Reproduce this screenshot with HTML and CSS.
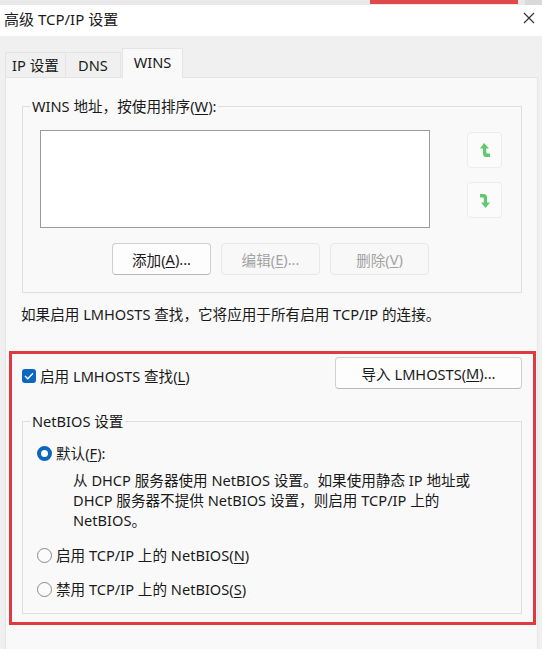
FILE: index.html
```html
<!DOCTYPE html>
<html lang="zh-CN">
<head>
<meta charset="utf-8">
<title>高级 TCP/IP 设置</title>
<link rel="stylesheet" href="styles.css">
</head>
<body>
<div class="strip"><span class="strip-red"></span><span class="strip-end"></span></div>
<div class="titlebar">
  <span class="title">高级 TCP/IP 设置</span>
  <svg class="close" width="12" height="12" viewBox="0 0 12 12"><path d="M1 1L11 11M11 1L1 11" stroke="#333" stroke-width="1.2" fill="none"/></svg>
</div>
<div class="tabs">
  <div class="tab t-ip">IP 设置</div>
  <div class="tab t-dns">DNS</div>
  <div class="tab active">WINS</div>
</div>
<div class="panel">
  <fieldset class="group wins">
    <legend>WINS 地址，按使用排序(<u>W</u>):</legend>
    <div class="list-row">
      <div class="listbox"></div>
      <div class="arrows">
        <div class="arrow-btn">
          <svg width="12" height="15" viewBox="0 0 12 15"><path d="M5 0L10 5.5H7.2V9.2Q7.2 10.6 8.6 10.6H11V14H7.6Q4 14 4 10.4V5.5H1Z" fill="#62c86e"/></svg>
        </div>
        <div class="arrow-btn">
          <svg width="12" height="15" viewBox="0 0 12 15"><path d="M1 1H4.6Q8 1 8 4.6V9.5H11L6.5 15L2 9.5H4.8V5.8Q4.8 4.4 3.4 4.4H1Z" fill="#62c86e"/></svg>
        </div>
      </div>
    </div>
    <div class="btn-row">
      <div class="btn">添加(<u>A</u>)...</div>
      <div class="btn disabled">编辑(<u>E</u>)...</div>
      <div class="btn disabled">删除(<u>V</u>)</div>
    </div>
  </fieldset>
  <p class="info">如果启用 LMHOSTS 查找，它将应用于所有启用 TCP/IP 的连接。</p>
  <div class="highlight">
    <div class="lm-row">
      <div class="check-label">
        <span class="checkbox"><svg width="10" height="8" viewBox="0 0 10 8"><path d="M1 4L3.8 6.8L9 1.2" stroke="#fff" stroke-width="1.4" fill="none"/></svg></span>
        <span>启用 LMHOSTS 查找(<u>L</u>)</span>
      </div>
      <div class="btn import">导入 LMHOSTS(<u>M</u>)...</div>
    </div>
    <fieldset class="group netbios">
      <legend>NetBIOS 设置</legend>
      <div class="radio-row first">
        <span class="radio on"></span>
        <span>默认(<u>F</u>):</span>
      </div>
      <p class="desc">从 DHCP 服务器使用 NetBIOS 设置。如果使用静态 IP 地址或<br>DHCP 服务器不提供 NetBIOS 设置，则启用 TCP/IP 上的<br>NetBIOS。</p>
      <div class="radio-row second">
        <span class="radio"></span>
        <span>启用 TCP/IP 上的 NetBIOS(<u>N</u>)</span>
      </div>
      <div class="radio-row third">
        <span class="radio"></span>
        <span>禁用 TCP/IP 上的 NetBIOS(<u>S</u>)</span>
      </div>
    </fieldset>
  </div>
</div>
</body>
</html>
```
FILE: styles.css
```css
html, body {
  margin: 0;
  padding: 0;
}
body {
  width: 542px;
  height: 649px;
  overflow: hidden;
  background: #f0f0f0;
  font-family: "Noto Sans", "Noto Sans CJK SC", sans-serif;
  font-size: 14.6px;
  color: #1a1a1a;
}
u {
  text-decoration-thickness: 1px;
  text-underline-offset: 2px;
}
.strip {
  height: 5px;
  background: #e9e9e9;
  display: flex;
}
.strip-red {
  margin-left: 370px;
  width: 148px;
  height: 4px;
  background: #e1484c;
}
.strip-end {
  margin-left: 7px;
  width: 17px;
  background: #d9d9d9;
}
.titlebar {
  height: 31px;
  box-sizing: border-box;
  background: #ffffff;
  display: flex;
  align-items: center;
  justify-content: space-between;
  padding: 0 7px 5px 4px;
}
.title {
  font-size: 15px;
}
.close {
  display: block;
}
.tabs {
  display: flex;
  align-items: flex-end;
  padding-left: 5px;
  margin-top: 12px;
  height: 29px;
}
.tab {
  height: 25px;
  line-height: 24px;
  box-sizing: border-box;
  border: 1px solid #e4e4e4;
  border-bottom: none;
  text-align: center;
}
.t-ip {
  width: 61px;
}
.t-dns {
  width: 56px;
  margin-left: -1px;
}
.tab.active {
  height: 30px;
  line-height: 26px;
  width: 61px;
  margin-left: 1px;
  background: #f9f9f9;
  margin-bottom: -1px;
  position: relative;
  z-index: 1;
}
.panel {
  margin: 0 4px 0 5px;
  height: 600px;
  background: #f9f9f9;
  border: 1px solid #e4e4e4;
  padding: 0 15px 0 16px;
}
.group {
  margin: 0;
  border: 1px solid #dedede;
  border-radius: 0;
  padding: 0;
  min-width: 0;
}
.group legend {
  padding: 0 2px;
  line-height: 20px;
}
.wins {
  margin-top: 18px;
  padding: 14px 0 0 17px;
  height: 197px;
  box-sizing: border-box;
}
.wins legend {
  margin-left: -10px;
}
.list-row {
  display: flex;
  align-items: flex-start;
}
.listbox {
  width: 390px;
  height: 98px;
  box-sizing: border-box;
  background: #ffffff;
  border: 1px solid #9a9a9a;
}
.arrows {
  margin-left: 37px;
  margin-top: 2px;
  display: flex;
  flex-direction: column;
  gap: 14px;
}
.arrow-btn {
  width: 35px;
  height: 36px;
  box-sizing: border-box;
  border: 1px solid #ececec;
  border-radius: 4px;
  background: #fbfbfb;
  display: flex;
  align-items: center;
  justify-content: center;
}
.arrow-btn svg {
  display: block;
}
.btn-row {
  display: flex;
  gap: 10px;
  margin-top: 15px;
  padding-left: 72px;
}
.btn {
  width: 99px;
  height: 32px;
  box-sizing: border-box;
  border: 1px solid #d0d0d0;
  border-bottom-color: #b8b8b8;
  border-radius: 4px;
  background: #fdfdfd;
  display: flex;
  align-items: center;
  justify-content: center;
}
.btn.disabled {
  color: #a3a3a3;
  border-color: #e8e8e8;
  background: #f8f8f8;
}
.info {
  margin: 11px 0 0 -1px;
  line-height: 20px;
}
.highlight {
  margin: 27px -14px 0 -13px;
  border: 3px solid #e0393f;
  padding: 3px 11px 8px 10px;
}
.lm-row {
  display: flex;
  justify-content: space-between;
  align-items: center;
  height: 32px;
}
.check-label {
  display: flex;
  align-items: center;
  gap: 4px;
  margin-top: 5px;
}
.checkbox {
  width: 14px;
  height: 14px;
  border-radius: 3px;
  background: #0a66bf;
  display: flex;
  align-items: center;
  justify-content: center;
}
.checkbox svg {
  display: block;
}
.import {
  width: 187px;
  height: 32px;
}
.netbios {
  margin-top: 22px;
  padding: 12px 0 14px 14px;
}
.netbios legend {
  margin-left: -7px;
}
.radio-row {
  display: flex;
  align-items: center;
  gap: 4px;
  line-height: 20px;
}
.radio {
  width: 15px;
  height: 15px;
  box-sizing: border-box;
  border-radius: 50%;
  border: 1px solid #8a8a8a;
  background: #fbfbfb;
}
.radio.on {
  border: 4px solid #0a66bf;
  background: #ffffff;
}
.desc {
  margin: 7px 0 0 36px;
  line-height: 20px;
}
.radio-row.second {
  margin-top: 15px;
}
.radio-row.third {
  margin-top: 14px;
}
```
